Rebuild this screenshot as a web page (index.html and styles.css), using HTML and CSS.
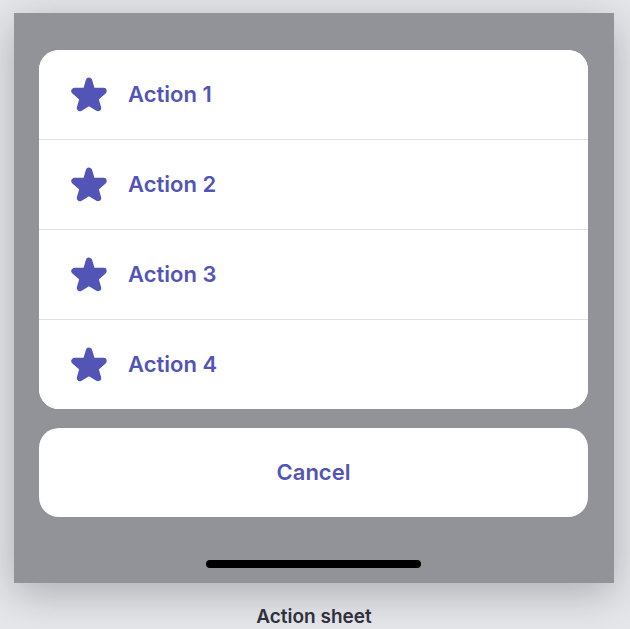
FILE: index.html
```html
<!DOCTYPE html>
<html lang="en">
<head>
    <meta charset="UTF-8">
    <title>Action sheet</title>
    <link rel="stylesheet" href="styles.css">
</head>
<body>
<!-- star shape shared by all actions -->
<svg class="defs" aria-hidden="true">
    <symbol id="star" viewBox="0 0 36 36">
        <path d="M18 4.7 L21 15 L32.5 15 L24.2 22.3 L27 32 L18 26.5 L9 32 L11.8 22.3 L3.5 15 L15 15 Z"
            fill="currentColor" stroke="currentColor" stroke-width="6.4" stroke-linejoin="round"/>
    </symbol>
</svg>

<figure class="demo">
    <div class="screen">
        <ul class="sheet">
            <li><button type="button" class="action"><svg class="icon" aria-hidden="true"><use href="#star"/></svg>Action 1</button></li>
            <li><button type="button" class="action"><svg class="icon" aria-hidden="true"><use href="#star"/></svg>Action 2</button></li>
            <li><button type="button" class="action"><svg class="icon" aria-hidden="true"><use href="#star"/></svg>Action 3</button></li>
            <li><button type="button" class="action"><svg class="icon" aria-hidden="true"><use href="#star"/></svg>Action 4</button></li>
        </ul>
        <button type="button" class="action cancel">Cancel</button>
        <div class="home-bar"></div>
    </div>
    <figcaption class="caption">Action sheet</figcaption>
</figure>
</body>
</html>
```

FILE: styles.css
```css
* {
    box-sizing: border-box;
}
body {
    margin: 0;
    padding: 13px 16px 0 14px;
    background: #e6e7eb;
    font-family: Inter, "Liberation Sans", sans-serif;
    overflow: hidden;
}
.defs {
    display: none;
}
.demo {
    margin: 0;
}

/* dimmed phone screen */
.screen {
    padding: 37px 26px 15px 25px;
    background: #929398;
    box-shadow: 0 10px 40px rgba(0, 0, 0, 0.26);
}
.sheet {
    margin: 0 0 19px;
    padding: 0;
    list-style: none;
    background: #fff;
    border-radius: 20px;
    overflow: hidden;
}
.sheet li + li {
    border-top: 1px solid #e1e1e1;
}
.action {
    display: flex;
    align-items: center;
    gap: 21px;
    width: 100%;
    height: 89px;
    padding: 0 32px 2px;
    border: 0;
    background: #fff;
    color: #5254b6;
    font: 600 22px/28px Inter, "Liberation Sans", sans-serif;
    text-align: left;
}
.icon {
    width: 36px;
    height: 36px;
}
.cancel {
    justify-content: center;
    border-radius: 20px;
}

/* home indicator */
.home-bar {
    width: 215px;
    height: 8px;
    margin: 43px auto 0;
    border-radius: 4px;
    background: #000;
}
.caption {
    padding-top: 22px;
    color: #30303d;
    font-size: 19px;
    font-weight: 600;
    line-height: 24px;
    text-align: center;
}
```
